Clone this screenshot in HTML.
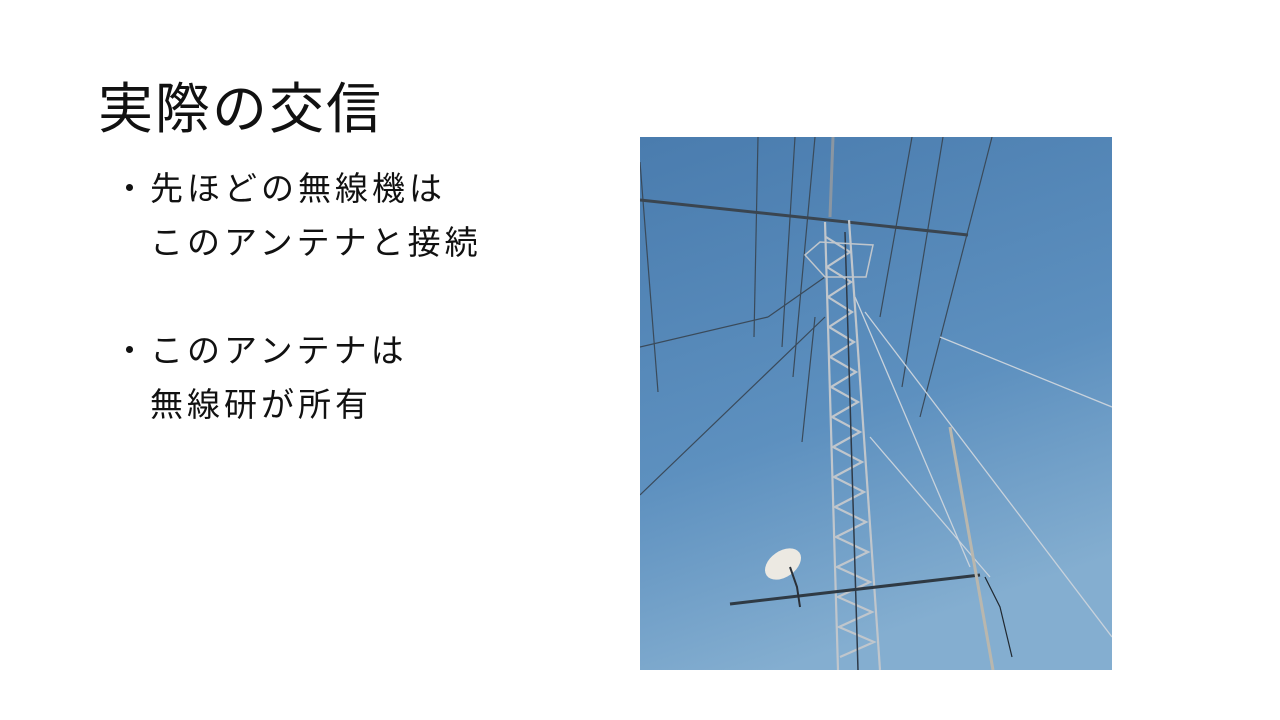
<!DOCTYPE html>
<html><head><meta charset="utf-8"><style>
html,body{margin:0;padding:0;background:#fff;width:1280px;height:720px;overflow:hidden;position:relative}
.t{position:absolute;font-family:"Liberation Sans","Noto Sans CJK JP",sans-serif;color:#111;white-space:nowrap}
h1{position:absolute;left:98px;top:82px;margin:0;font-weight:400;font-size:55px;line-height:55px;letter-spacing:2px;font-family:"Liberation Sans","Noto Sans CJK JP",sans-serif;color:#111}
.b{font-size:33px;line-height:33px;letter-spacing:4px}
svg{position:absolute;left:640px;top:137px}
</style></head><body>
<h1>実際の交信</h1>
<div class="t b" style="left:113px;top:172px">・先ほどの無線機は</div>
<div class="t b" style="left:150px;top:226px">このアンテナと接続</div>
<div class="t b" style="left:113px;top:334px">・このアンテナは</div>
<div class="t b" style="left:150px;top:388px">無線研が所有</div>
<svg width="472" height="533" viewBox="0 0 472 533">
<defs><linearGradient id="g" x1="0" y1="0" x2="0.3" y2="1">
<stop offset="0" stop-color="#4a7cae"/><stop offset="0.6" stop-color="#5d90bf"/><stop offset="1" stop-color="#84aed0"/></linearGradient></defs>
<rect width="472" height="533" fill="url(#g)"/>
<g stroke="#3a4a5a" stroke-width="1.2" fill="none">
<line x1="0" y1="25" x2="18" y2="255"/>
<line x1="118" y1="0" x2="114" y2="200"/>
<line x1="155" y1="0" x2="142" y2="210"/>
<line x1="175" y1="0" x2="153" y2="240"/>
<line x1="272" y1="0" x2="240" y2="180"/>
<line x1="303" y1="0" x2="262" y2="250"/>
<line x1="352" y1="0" x2="280" y2="280"/>
<line x1="175" y1="180" x2="162" y2="305"/>
<line x1="0" y1="210" x2="128" y2="180"/>
<line x1="0" y1="358" x2="185" y2="180"/>
<line x1="128" y1="180" x2="185" y2="140"/>
</g>
<g stroke="#c8d2dc" stroke-width="1.3" fill="none">
<line x1="215" y1="160" x2="330" y2="430"/>
<line x1="225" y1="175" x2="472" y2="500"/>
<line x1="230" y1="300" x2="350" y2="440"/>
<line x1="300" y1="200" x2="472" y2="270"/>
</g>
<line x1="0" y1="63" x2="328" y2="98" stroke="#3a4550" stroke-width="3"/>
<line x1="193" y1="0" x2="190" y2="80" stroke="#8a96a2" stroke-width="3"/>
<g stroke="#c0c6cc" stroke-width="2.2" fill="none">
<line x1="185" y1="85" x2="198" y2="533"/>
<line x1="209" y1="83" x2="240" y2="533"/>
<path d="M186 100 L210 115 L187 130 L211 145 L188 160 L212 175 L189 190 L214 205 L190 220 L216 235 L191 250 L218 265 L192 280 L220 295 L193 310 L222 325 L194 340 L224 355 L195 370 L226 385 L196 400 L228 415 L197 430 L230 445 L198 460 L232 475 L199 490 L234 505 L200 520"/>
</g>
<line x1="205" y1="95" x2="218" y2="533" stroke="#2e3a48" stroke-width="1.5"/>
<path d="M165 118 L180 105 L233 108 L226 140 L185 140 Z" fill="none" stroke="#c0c6cc" stroke-width="1.5"/>
<line x1="90" y1="467" x2="340" y2="438" stroke="#2f3a44" stroke-width="3"/>
<line x1="310" y1="290" x2="353" y2="533" stroke="#b9b7ae" stroke-width="3"/>
<ellipse cx="143" cy="427" rx="20" ry="13" transform="rotate(-35 143 427)" fill="#ece9e2"/>
<path d="M150 430 L157 450 L160 470" stroke="#2a3038" stroke-width="2" fill="none"/>
<path d="M345 440 L360 470 L372 520" stroke="#202830" stroke-width="1.2" fill="none"/>
</svg>
</body></html>
